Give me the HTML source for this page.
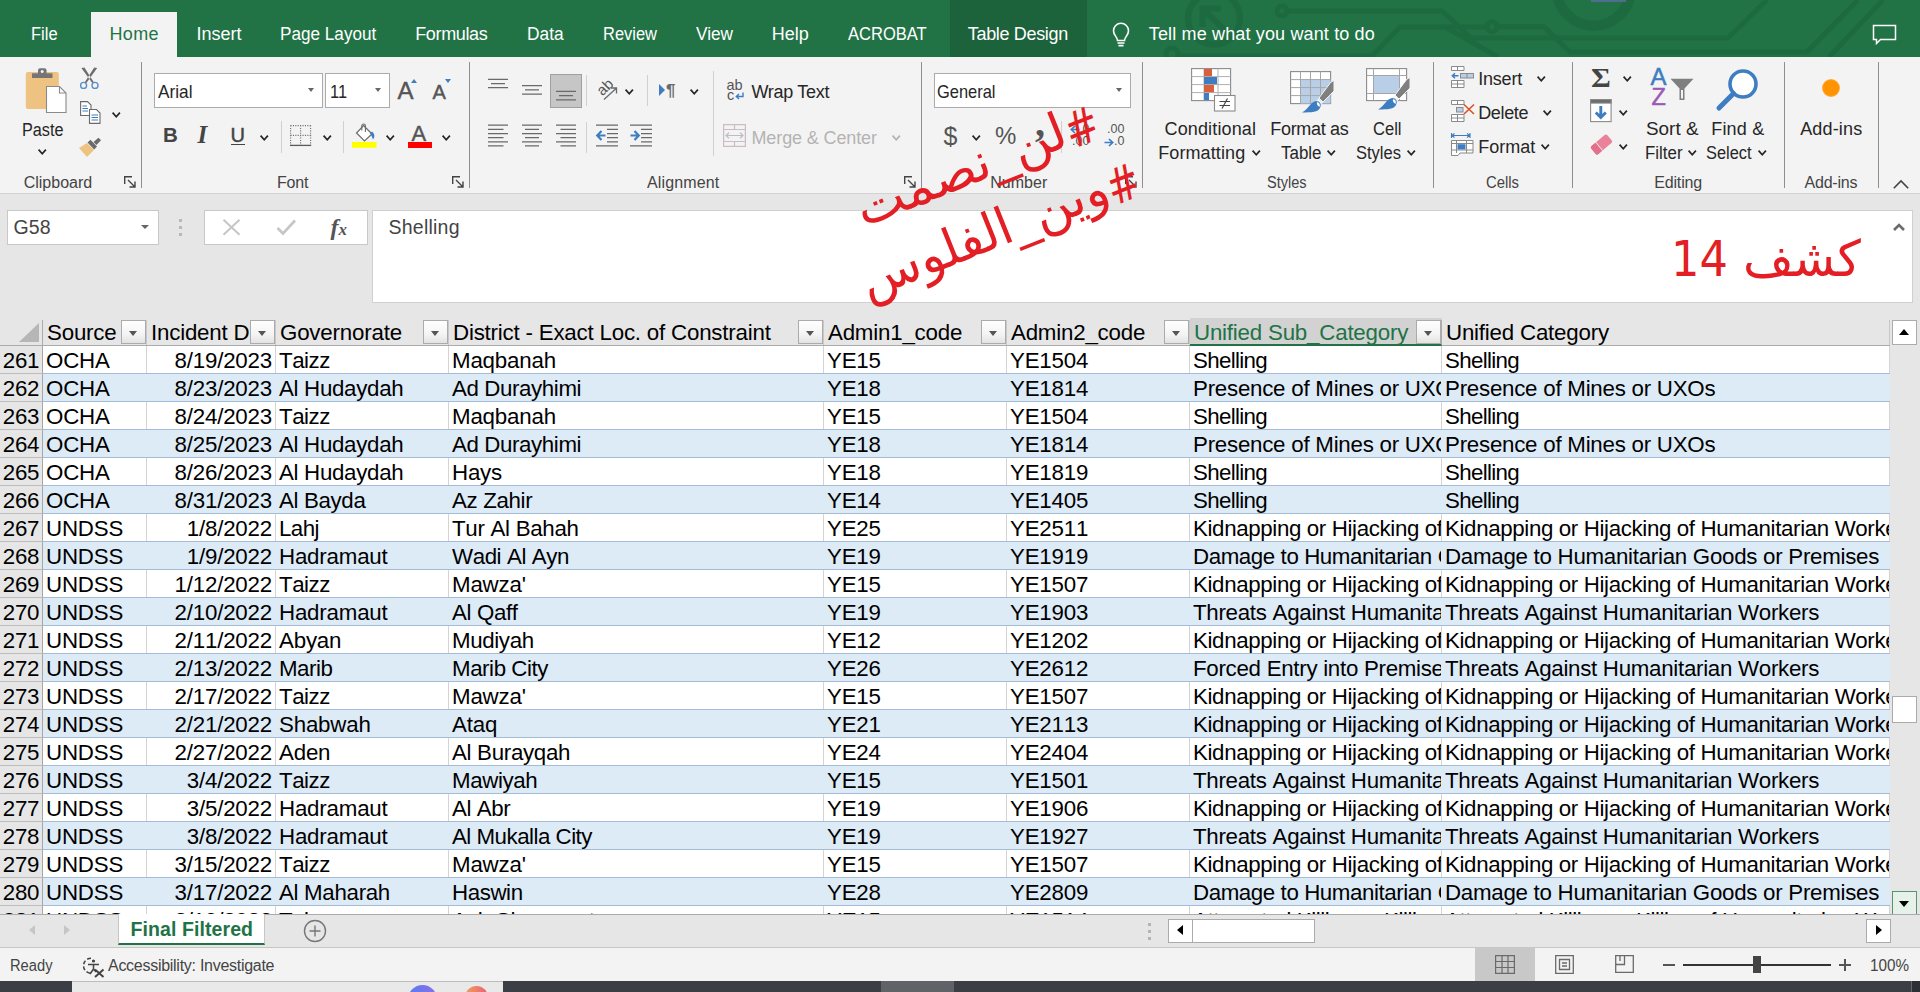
<!DOCTYPE html>
<html lang="en"><head><meta charset="utf-8"><title>Excel - Final Filtered</title>
<style>
html,body{margin:0;padding:0}
body{width:1920px;height:992px;overflow:hidden;position:relative;background:#e6e6e6;font-family:"Liberation Sans",sans-serif;}
.a,.t,svg{position:absolute}
.t{white-space:pre;display:block}
svg{overflow:visible}
#title{left:0;top:0;width:1920px;height:57px;background:#217346;overflow:hidden}
#ribbon{left:0;top:57px;width:1920px;height:137px;background:#f3f3f3;border-bottom:1px solid #d2d2d2;box-sizing:border-box}
.gs{width:1px;background:#8f8f8f;top:62px;height:126px}
.ss{width:1px;background:#d0d0d0}
.box{background:#fff;border:1px solid #ababab;box-sizing:border-box}
#grid{left:0;top:320px;width:1890px;height:594px;overflow:hidden;background:#fff;font-kerning:none}
.row{left:0;width:1890px;height:27px;background:#fff;border-bottom:1px solid #a5bcd8}
.b{background:#ddebf7}
.b .c{border-right-color:transparent}
.c{position:absolute;top:0;height:27px;overflow:hidden;white-space:pre;font-size:22.3px;letter-spacing:-0.19px;line-height:27px;color:#000;box-sizing:border-box;padding:0 3px 0 3px;border-right:1px solid #d4d4d4}
.rh{position:absolute;left:0;top:0;width:42px;height:27px;background:#e6e6e6;border-right:1px solid #a6a6a6;border-bottom:1px solid #bcbcbc;font-size:22.3px;letter-spacing:-0.19px;line-height:29px;text-align:center;color:#000;overflow:hidden;box-sizing:content-box}
.fb{position:absolute;width:25px;height:24px;top:0;box-sizing:border-box;border:1px solid #ababab;background:linear-gradient(#fff,#f4f4f4 60%,#e2e2e2)}
.fb:after{content:"";position:absolute;left:7px;top:10px;border-left:4.5px solid transparent;border-right:4.5px solid transparent;border-top:5px solid #555}
</style></head><body>
<div class="a" id="title">
<svg width="1920" height="57" viewBox="0 0 1920 57" fill="none" stroke="#1e6a40" stroke-width="5">
<circle cx="1214" cy="18.5" r="26" stroke-width="6.5"/><path d="M1229 34 L1203 9 M1202.500 27 V8.500 H1221" stroke-width="6"/>
<circle cx="1282" cy="11" r="5"/><path d="M1287 11 H1442 L1471 38 H1728 L1767 0"/>
<circle cx="1172" cy="54" r="6"/><path d="M1178 56 H1372 L1400 27 H1487"/>
<circle cx="1492" cy="26.700" r="5"/><path d="M1497 26.700 H1544 L1570 52 H1807 L1858 0"/>
<path d="M1447 28 L1498 57"/><path d="M1829 57 L1883 0"/>
<circle cx="1593.700" cy="-11.300" r="37" stroke-width="10.500"/>
</svg>
<div class="a" style="left:1591px;top:0;width:35px;height:2px;background:#4f6d8c"></div>
<div class="a" style="left:91px;top:12px;width:86px;height:45px;background:#f3f3f3"></div>
<div class="a" style="left:950px;top:0;width:137px;height:57px;background:#1c623b"></div>
<span class="t" id="t0" style="left:31.20px;top:24.76px;font-size:18.00px;line-height:18.00px;color:#ffffff;transform:scaleX(0.9167);transform-origin:0 0;">File</span>
<span class="t" id="t1" style="left:109.50px;top:24.76px;font-size:18.00px;line-height:18.00px;color:#217346;letter-spacing:0.328px;">Home</span>
<span class="t" id="t2" style="left:196.50px;top:24.76px;font-size:18.00px;line-height:18.00px;color:#ffffff;letter-spacing:-0.006px;">Insert</span>
<span class="t" id="t3" style="left:280.20px;top:24.76px;font-size:18.00px;line-height:18.00px;color:#ffffff;transform:scaleX(0.9526);transform-origin:0 0;">Page Layout</span>
<span class="t" id="t4" style="left:415.20px;top:24.76px;font-size:18.00px;line-height:18.00px;color:#ffffff;letter-spacing:-0.345px;">Formulas</span>
<span class="t" id="t5" style="left:527.20px;top:24.76px;font-size:18.00px;line-height:18.00px;color:#ffffff;transform:scaleX(0.9624);transform-origin:0 0;">Data</span>
<span class="t" id="t6" style="left:602.50px;top:24.76px;font-size:18.00px;line-height:18.00px;color:#ffffff;transform:scaleX(0.9148);transform-origin:0 0;">Review</span>
<span class="t" id="t7" style="left:696.20px;top:24.76px;font-size:18.00px;line-height:18.00px;color:#ffffff;transform:scaleX(0.9560);transform-origin:0 0;">View</span>
<span class="t" id="t8" style="left:771.80px;top:24.76px;font-size:18.00px;line-height:18.00px;color:#ffffff;letter-spacing:-0.010px;">Help</span>
<span class="t" id="t9" style="left:847.80px;top:24.76px;font-size:18.00px;line-height:18.00px;color:#ffffff;transform:scaleX(0.9185);transform-origin:0 0;">ACROBAT</span>
<span class="t" id="t10" style="left:967.80px;top:24.76px;font-size:18.00px;line-height:18.00px;color:#ffffff;letter-spacing:-0.333px;">Table Design</span>
<span class="t" id="t11" style="left:1148.80px;top:24.76px;font-size:18.00px;line-height:18.00px;color:#ffffff;letter-spacing:0.149px;">Tell me what you want to do</span>
<svg style="left:1111px;top:22px" width="20" height="26" viewBox="0 0 20 26" fill="none" stroke="#fff" stroke-width="1.6">
<path d="M6.5 18.5 C6.5 15 2.5 13.5 2.5 8.8 A7.5 7.5 0 0 1 17.5 8.8 C17.5 13.5 13.5 15 13.5 18.5 Z"/><path d="M6.5 21 H13.5 M7.5 23.6 H12.5"/></svg>
<svg style="left:1872px;top:24px" width="26" height="22" viewBox="0 0 26 22" fill="none" stroke="#fff" stroke-width="1.5">
<path d="M1.5 1.5 H23.5 V15.5 H8.5 L4.5 19.5 V15.5 H1.5 Z"/></svg>
</div>
<div class="a" id="ribbon"></div>
<div class="a gs" style="left:141.0px"></div>
<div class="a gs" style="left:469.0px"></div>
<div class="a gs" style="left:921.0px"></div>
<div class="a gs" style="left:1142.0px"></div>
<div class="a gs" style="left:1433.0px"></div>
<div class="a gs" style="left:1572.0px"></div>
<div class="a gs" style="left:1784.0px"></div>
<div class="a gs" style="left:1878.0px"></div>
<span class="t" id="t12" style="left:23.70px;top:174.86px;font-size:16.00px;line-height:16.00px;color:#444;">Clipboard</span>
<span class="t" id="t13" style="left:277.00px;top:174.86px;font-size:16.00px;line-height:16.00px;color:#444;letter-spacing:-0.172px;">Font</span>
<span class="t" id="t14" style="left:647.00px;top:174.86px;font-size:16.00px;line-height:16.00px;color:#444;letter-spacing:0.130px;">Alignment</span>
<span class="t" id="t15" style="left:990.30px;top:174.86px;font-size:16.00px;line-height:16.00px;color:#444;">Number</span>
<span class="t" id="t16" style="left:1267.00px;top:174.86px;font-size:16.00px;line-height:16.00px;color:#444;transform:scaleX(0.9064);transform-origin:0 0;">Styles</span>
<span class="t" id="t17" style="left:1485.50px;top:174.86px;font-size:16.00px;line-height:16.00px;color:#444;transform:scaleX(0.9279);transform-origin:0 0;">Cells</span>
<span class="t" id="t18" style="left:1654.20px;top:174.86px;font-size:16.00px;line-height:16.00px;color:#444;letter-spacing:-0.154px;">Editing</span>
<span class="t" id="t19" style="left:1804.50px;top:174.86px;font-size:16.00px;line-height:16.00px;color:#444;letter-spacing:-0.208px;">Add-ins</span>
<svg style="left:124.0px;top:176.0px" width="12" height="12" viewBox="0 0 12 12" fill="none" stroke="#444" stroke-width="1.4"><path d="M0.7 8 V0.7 H8"/><path d="M4 4 L11 11 M11 5.5 V11 H5.5"/></svg>
<svg style="left:452.0px;top:176.0px" width="12" height="12" viewBox="0 0 12 12" fill="none" stroke="#444" stroke-width="1.4"><path d="M0.7 8 V0.7 H8"/><path d="M4 4 L11 11 M11 5.5 V11 H5.5"/></svg>
<svg style="left:904.0px;top:176.0px" width="12" height="12" viewBox="0 0 12 12" fill="none" stroke="#444" stroke-width="1.4"><path d="M0.7 8 V0.7 H8"/><path d="M4 4 L11 11 M11 5.5 V11 H5.5"/></svg>
<svg style="left:1125.0px;top:176.0px" width="12" height="12" viewBox="0 0 12 12" fill="none" stroke="#444" stroke-width="1.4"><path d="M0.7 8 V0.7 H8"/><path d="M4 4 L11 11 M11 5.5 V11 H5.5"/></svg>
<svg style="left:1892.5px;top:180px" width="16" height="9" viewBox="0 0 16 9" fill="none" stroke="#444" stroke-width="1.6"><path d="M0.8 8.2 L8 1 L15.2 8.2"/></svg>
<svg style="left:25px;top:67px" width="44" height="47" viewBox="0 0 44 47">
<rect x="0.8" y="5" width="33" height="37" rx="2" fill="#eec382"/><rect x="7" y="6.3" width="20.5" height="4.7" fill="#757575"/><rect x="13" y="1.3" width="8.5" height="7" rx="2" fill="#757575"/><circle cx="17.2" cy="4.6" r="1.5" fill="#f3f3f3"/>
<path d="M21.5 19.5 H34.5 L41 26 V45.5 H21.5 Z" fill="#fff" stroke="#8a8a8a" stroke-width="1.1"/><path d="M34.5 19.5 V26 H41" fill="none" stroke="#8a8a8a" stroke-width="1.1"/></svg>
<span class="t" id="t20" style="left:22.00px;top:120.76px;font-size:18.00px;line-height:18.00px;color:#262626;transform:scaleX(0.9016);transform-origin:0 0;">Paste</span>
<svg style="left:38.3px;top:148.8px" width="8.5" height="5.8" viewBox="0 0 8.5 5.8" fill="none" stroke="#262626" stroke-width="1.7"><path d="M0.6 0.6 L4.25 4.80 L7.90 0.6"/></svg>
<svg style="left:79px;top:67px" width="21" height="23" viewBox="0 0 21 23" fill="none"><path d="M2.4 0.9 L5.4 0.5 L15 15.4 L13.4 16.3 Z M18.2 0.9 L15.2 0.5 L5.6 15.4 L7.2 16.3 Z" fill="#6e6e6e"/><circle cx="4.6" cy="18.4" r="3" stroke="#5b8fc9" stroke-width="1.4"/><circle cx="16" cy="18.4" r="3" stroke="#5b8fc9" stroke-width="1.4"/></svg>
<svg style="left:80px;top:101px" width="21" height="23" viewBox="0 0 21 23" fill="#fff" stroke="#6a6a6a" stroke-width="1.1"><path d="M0.6 0.6 H7.5 L11 4 V14.5 H0.6 Z"/><path d="M9.5 8.5 H16.5 L20 12 V22.4 H9.5 Z"/><path d="M2.5 5 H7 M2.5 7.5 H8 M2.5 10 H8 M11.5 14 H18 M11.5 16.5 H18 M11.5 19 H18" stroke="#3e7dc1" stroke-width="1"/></svg>
<svg style="left:112.0px;top:112.2px" width="8.5" height="5.8" viewBox="0 0 8.5 5.8" fill="none" stroke="#262626" stroke-width="1.7"><path d="M0.6 0.6 L4.25 4.80 L7.90 0.6"/></svg>
<svg style="left:78px;top:137px" width="24" height="21" viewBox="0 0 24 21"><path d="M1 11 L9 6 L16 13 L9 20 Z" fill="#eec382"/><path d="M9.5 5.5 L12.5 2.8 L19 9.5 L16.2 12.5 Z" fill="#6a6a6a"/><path d="M15.5 5 L20.5 0.8 L23 3.3 L18.5 8 Z" fill="#6a6a6a"/></svg>
<div class="a box" style="left:154px;top:73px;width:169px;height:35px"></div>
<div class="a box" style="left:325px;top:73px;width:65px;height:35px"></div>
<span class="t" id="t21" style="left:157.50px;top:82.22px;font-size:19.00px;line-height:19.00px;color:#262626;transform:scaleX(0.9075);transform-origin:0 0;">Arial</span>
<span class="t" id="t22" style="left:330.00px;top:82.22px;font-size:19.00px;line-height:19.00px;color:#262626;transform:scaleX(0.8614);transform-origin:0 0;">11</span>
<div class="a" style="left:307.5px;top:88.0px;border-left:3.8px solid transparent;border-right:3.8px solid transparent;border-top:4.2px solid #666"></div>
<div class="a" style="left:375.0px;top:88.0px;border-left:3.8px solid transparent;border-right:3.8px solid transparent;border-top:4.2px solid #666"></div>
<span class="t" id="t23" style="left:397.50px;top:78.68px;font-size:24.00px;line-height:24.00px;color:#555;-webkit-text-stroke:0.45px #555;">A</span>
<div class="a" style="left:411px;top:79px;border-left:3.5px solid transparent;border-right:3.5px solid transparent;border-bottom:4px solid #3e7dc1"></div>
<span class="t" id="t24" style="left:432.50px;top:82.07px;font-size:20.00px;line-height:20.00px;color:#555;-webkit-text-stroke:0.45px #555;">A</span>
<div class="a" style="left:445px;top:79px;border-left:3.5px solid transparent;border-right:3.5px solid transparent;border-top:4px solid #3e7dc1"></div>
<span class="t" id="t25" style="left:163.00px;top:124.65px;font-size:20.50px;line-height:20.50px;color:#444;font-weight:bold;">B</span>
<span class="t" id="t26" style="left:197.50px;top:121.56px;font-size:25.00px;line-height:25.00px;color:#444;font-weight:bold;font-style:italic;font-family:'Liberation Serif',serif;">I</span>
<span class="t" id="t27" style="left:230.50px;top:125.07px;font-size:20.00px;line-height:20.00px;color:#444;-webkit-text-stroke:0.45px #444;">U</span>
<div class="a" style="left:230.5px;top:143.5px;width:14px;height:1.5px;background:#444"></div>
<svg style="left:260.0px;top:134.7px" width="8.5" height="5.8" viewBox="0 0 8.5 5.8" fill="none" stroke="#262626" stroke-width="1.7"><path d="M0.6 0.6 L4.25 4.80 L7.90 0.6"/></svg>
<div class="a ss" style="left:280.5px;top:121px;height:32px"></div>
<svg style="left:290px;top:125px" width="22" height="22" viewBox="0 0 22 22" fill="none" stroke="#6e6e6e" stroke-width="1.1"><path d="M0.5 0.6 H21 M0.6 0.5 V20 M20.6 0.5 V20 M10.6 0.5 V20 M0.5 10.4 H21" stroke-dasharray="1.1 1.3"/><path d="M0 20.4 H21.2" stroke="#5a5a5a" stroke-width="1.3"/></svg>
<svg style="left:323.0px;top:135.0px" width="8.5" height="5.8" viewBox="0 0 8.5 5.8" fill="none" stroke="#262626" stroke-width="1.7"><path d="M0.6 0.6 L4.25 4.80 L7.90 0.6"/></svg>
<div class="a ss" style="left:343px;top:121px;height:32px"></div>
<svg style="left:352px;top:123px" width="25" height="25" viewBox="0 0 25 25" fill="none"><rect x="0" y="19" width="24.5" height="5.8" fill="#ffff00"/>
<path d="M11.5 2.5 L20 11 L12.5 18 L4.5 10 Z" fill="#fff" stroke="#6a6a6a" stroke-width="1.2"/><path d="M9.8 7.5 V2.8 A1.8 1.8 0 0 1 13.4 2.8 V9" stroke="#6a6a6a" stroke-width="1.1"/><path d="M20 8.5 C23 11 23 14 21 16.5 C20 14 19.5 12 18 10.5 Z" fill="#3e7dc1"/></svg>
<svg style="left:386.0px;top:135.0px" width="8.5" height="5.8" viewBox="0 0 8.5 5.8" fill="none" stroke="#262626" stroke-width="1.7"><path d="M0.6 0.6 L4.25 4.80 L7.90 0.6"/></svg>
<span class="t" id="t28" style="left:411.50px;top:122.88px;font-size:22.00px;line-height:22.00px;color:#555;-webkit-text-stroke:0.45px #555;">A</span>
<div class="a" style="left:408px;top:142px;width:24px;height:5.8px;background:#ff0000"></div>
<svg style="left:441.7px;top:135.0px" width="8.5" height="5.8" viewBox="0 0 8.5 5.8" fill="none" stroke="#262626" stroke-width="1.7"><path d="M0.6 0.6 L4.25 4.80 L7.90 0.6"/></svg>
<svg style="left:0;top:0" width="1" height="1"><path d="M488.0 79.3 H508.0M491.0 83.5 H505.0M488.0 87.7 H508.0" stroke="#6a6a6a" stroke-width="1.25" fill="none"/></svg>
<svg style="left:0;top:0" width="1" height="1"><path d="M522.0 85.6 H542.0M525.0 89.8 H539.0M522.0 94.0 H542.0" stroke="#6a6a6a" stroke-width="1.25" fill="none"/></svg>
<div class="a" style="left:550px;top:74px;width:32px;height:34px;background:#c6c6c6;border:1px solid #a0a0a0;box-sizing:border-box"></div>
<svg style="left:0;top:0" width="1" height="1"><path d="M556.0 91.4 H576.0M559.0 95.6 H573.0M556.0 99.8 H576.0" stroke="#6a6a6a" stroke-width="1.25" fill="none"/></svg>
<svg style="left:0;top:0" width="1" height="1"><path d="M488.0 125.2 H508.0M488.0 129.3 H503.5M488.0 133.5 H508.0M488.0 137.6 H503.5M488.0 141.8 H508.0M488.0 145.9 H503.5" stroke="#6a6a6a" stroke-width="1.25" fill="none"/></svg>
<svg style="left:0;top:0" width="1" height="1"><path d="M522.0 125.2 H542.0M525.0 129.3 H539.0M522.0 133.5 H542.0M525.0 137.6 H539.0M522.0 141.8 H542.0M525.0 145.9 H539.0" stroke="#6a6a6a" stroke-width="1.25" fill="none"/></svg>
<svg style="left:0;top:0" width="1" height="1"><path d="M556.0 125.2 H576.0M560.5 129.3 H576.0M556.0 133.5 H576.0M560.5 137.6 H576.0M556.0 141.8 H576.0M560.5 145.9 H576.0" stroke="#6a6a6a" stroke-width="1.25" fill="none"/></svg>
<div class="a ss" style="left:586px;top:75px;height:31px"></div><div class="a ss" style="left:586px;top:122px;height:31px"></div>
<span class="t" style="left:603.5px;top:83px;font-size:15px;line-height:15px;color:#555;transform:rotate(-45deg);transform-origin:0 100%">ab</span>
<svg style="left:603px;top:87px" width="15" height="14" viewBox="0 0 15 14" fill="none" stroke="#6a6a6a" stroke-width="1.3"><path d="M1 12.5 L13.3 1.2 M8 1 H13.5 V6.5"/></svg>
<svg style="left:625.0px;top:88.6px" width="8.5" height="5.8" viewBox="0 0 8.5 5.8" fill="none" stroke="#262626" stroke-width="1.7"><path d="M0.6 0.6 L4.25 4.80 L7.90 0.6"/></svg>
<div class="a ss" style="left:647px;top:75px;height:31px"></div>
<div class="a" style="left:658.7px;top:84px;border-top:6px solid transparent;border-bottom:6px solid transparent;border-left:6.5px solid #3e7dc1"></div>
<span class="t" id="t29" style="left:666.00px;top:81.61px;font-size:17.00px;line-height:17.00px;color:#6a6a6a;font-weight:bold;">¶</span>
<svg style="left:690.0px;top:88.6px" width="8.5" height="5.8" viewBox="0 0 8.5 5.8" fill="none" stroke="#262626" stroke-width="1.7"><path d="M0.6 0.6 L4.25 4.80 L7.90 0.6"/></svg>
<svg style="left:0;top:0" width="1" height="1"><path d="M596.0 125.2 H618.0M607.0 129.3 H618.0M607.0 133.5 H618.0M607.0 137.6 H618.0M607.0 141.8 H618.0M596.0 145.9 H618.0" stroke="#6a6a6a" stroke-width="1.25" fill="none"/></svg>
<svg style="left:596px;top:130px" width="10" height="11" viewBox="0 0 10 11" fill="none" stroke="#3e7dc1" stroke-width="2.2"><path d="M9.5 5.5 H1.5 M5.5 1 L1.2 5.5 L5.5 10"/></svg>
<svg style="left:0;top:0" width="1" height="1"><path d="M630.0 125.2 H652.0M641.0 129.3 H652.0M641.0 133.5 H652.0M641.0 137.6 H652.0M641.0 141.8 H652.0M630.0 145.9 H652.0" stroke="#6a6a6a" stroke-width="1.25" fill="none"/></svg>
<svg style="left:630px;top:130px" width="10" height="11" viewBox="0 0 10 11" fill="none" stroke="#3e7dc1" stroke-width="2.2"><path d="M0.5 5.5 H8.5 M4.5 1 L8.8 5.5 L4.5 10"/></svg>
<div class="a ss" style="left:712.5px;top:71px;height:85px"></div>
<span class="t" id="t30" style="left:726.50px;top:78.23px;font-size:14.50px;line-height:14.50px;color:#555;">ab</span>
<span class="t" id="t31" style="left:727.00px;top:88.23px;font-size:14.50px;line-height:14.50px;color:#555;">c</span>
<svg style="left:735px;top:92px" width="9" height="8" viewBox="0 0 9 8" fill="none" stroke="#3e7dc1" stroke-width="1.4"><path d="M8 0.5 V4.5 H1.5 M4 2 L1.3 4.5 L4 7"/></svg>
<span class="t" id="t32" style="left:751.50px;top:83.06px;font-size:18.00px;line-height:18.00px;color:#262626;letter-spacing:-0.297px;">Wrap Text</span>
<svg style="left:723px;top:124px" width="23" height="23" viewBox="0 0 23 23" fill="none" stroke="#c9bcc6" stroke-width="1.2"><path d="M0.6 0.6 H22.4 V22.4 H0.6 Z M0.6 5.5 H22.4 M0.6 17.5 H22.4 M11.5 0.6 V5.5 M11.5 17.5 V22.4"/><path d="M3 11.5 H20 M6 8.8 L3 11.5 L6 14.2 M17 8.8 L20 11.5 L17 14.2" stroke="#bdbdbd"/></svg>
<span class="t" id="t33" style="left:751.50px;top:129.06px;font-size:18.00px;line-height:18.00px;color:#b3b3b3;letter-spacing:-0.120px;">Merge &amp; Center</span>
<svg style="left:891.7px;top:134.5px" width="8.5" height="5.8" viewBox="0 0 8.5 5.8" fill="none" stroke="#b3b3b3" stroke-width="1.7"><path d="M0.6 0.6 L4.25 4.80 L7.90 0.6"/></svg>
<div class="a box" style="left:934px;top:73px;width:197px;height:35px"></div>
<span class="t" id="t34" style="left:937.00px;top:82.22px;font-size:19.00px;line-height:19.00px;color:#262626;transform:scaleX(0.8653);transform-origin:0 0;">General</span>
<div class="a" style="left:1115.8px;top:88.0px;border-left:3.8px solid transparent;border-right:3.8px solid transparent;border-top:4.2px solid #666"></div>
<span class="t" id="t35" style="left:943.50px;top:123.84px;font-size:25.00px;line-height:25.00px;color:#555;">$</span>
<svg style="left:971.7px;top:134.8px" width="8.5" height="5.8" viewBox="0 0 8.5 5.8" fill="none" stroke="#262626" stroke-width="1.7"><path d="M0.6 0.6 L4.25 4.80 L7.90 0.6"/></svg>
<span class="t" id="t36" style="left:995.00px;top:124.18px;font-size:24.00px;line-height:24.00px;color:#555;">%</span>
<span class="t" id="t37" style="left:1035.00px;top:102.50px;font-size:40.00px;line-height:40.00px;color:#555;font-weight:bold;font-family:'Liberation Serif',serif;">,</span>
<div class="a ss" style="left:1060.5px;top:121px;height:32px"></div>
<span class="t" id="t38" style="left:1079.00px;top:122.92px;font-size:12.50px;line-height:12.50px;color:#555;">.0</span>
<span class="t" id="t39" style="left:1072.00px;top:135.42px;font-size:12.50px;line-height:12.50px;color:#555;">.00</span>
<svg style="left:1070px;top:125px" width="10" height="9" viewBox="0 0 10 9" fill="none" stroke="#3e7dc1" stroke-width="1.7"><path d="M9.5 4.5 H1.5 M5 1 L1.3 4.5 L5 8"/></svg>
<span class="t" id="t40" style="left:1107.00px;top:122.92px;font-size:12.50px;line-height:12.50px;color:#555;">.00</span>
<span class="t" id="t41" style="left:1114.00px;top:135.42px;font-size:12.50px;line-height:12.50px;color:#555;">.0</span>
<svg style="left:1104px;top:137.5px" width="10" height="9" viewBox="0 0 10 9" fill="none" stroke="#3e7dc1" stroke-width="1.7"><path d="M0.5 4.5 H8.5 M5 1 L8.7 4.5 L5 8"/></svg>
<svg style="left:1191px;top:68px" width="45" height="44" viewBox="0 0 45 44"><rect x="0.6" y="0.6" width="39" height="32" fill="#fff" stroke="#8a8a8a" stroke-width="1.1"/>
<path d="M0.6 8.6 H39.6 M0.6 16.6 H39.6 M0.6 24.6 H39.6 M13 0.6 V32.6 M27 0.6 V32.6" stroke="#b0b0b0" stroke-width="1" fill="none"/>
<rect x="13" y="1" width="8" height="7.2" fill="#d9603b"/><rect x="13" y="9" width="13" height="7.2" fill="#3e7dc1"/><rect x="13" y="17" width="10" height="7.2" fill="#d9603b"/><rect x="13" y="25" width="5" height="7.2" fill="#3e7dc1"/>
<rect x="23.5" y="27.5" width="20.5" height="15.5" fill="#fff" stroke="#8a8a8a" stroke-width="1.1"/><path d="M28.5 33.5 H39 M28.5 37.5 H39 M36.5 30.5 L31 40.5" stroke="#444" stroke-width="1.2"/></svg>
<span class="t" id="t42" style="left:1164.50px;top:119.86px;font-size:18.00px;line-height:18.00px;color:#262626;letter-spacing:0.144px;">Conditional</span>
<span class="t" id="t43" style="left:1158.20px;top:143.96px;font-size:18.00px;line-height:18.00px;color:#262626;letter-spacing:0.108px;">Formatting</span>
<svg style="left:1252.2px;top:149.5px" width="8.5" height="5.8" viewBox="0 0 8.5 5.8" fill="none" stroke="#262626" stroke-width="1.7"><path d="M0.6 0.6 L4.25 4.80 L7.90 0.6"/></svg>
<svg style="left:1290px;top:71px" width="45" height="43" viewBox="0 0 45 43"><rect x="0.6" y="0.6" width="40" height="32" fill="#fff" stroke="#8a8a8a" stroke-width="1.1"/><rect x="10.5" y="8.5" width="30" height="24" fill="#b9cfe8"/>
<path d="M0.6 8.6 H40.6 M0.6 16.6 H40.6 M0.6 24.6 H40.6 M10.5 0.6 V32.6 M20.5 0.6 V32.6 M30.5 0.6 V32.6" stroke="#a6a6a6" stroke-width="1" fill="none"/>
<path d="M29 27 L41 11 L44 9.5 V20 L33 31 Z" fill="#7f7f7f" stroke="#f3f3f3" stroke-width="1"/><path d="M28.5 27.5 L33 31.5 L30.5 34 L26 30 Z" fill="#f3f3f3"/><path d="M26 30 C30 30 32 33 30 37 C28 41 22 41.5 12 41.5 C19 38 20 31 26 30 Z" fill="#3e7dc1"/><path d="M27 31 C29.5 31.5 30.5 33.5 29.5 36 C27.5 35 26.5 33 27 31Z" fill="#fff"/></svg>
<span class="t" id="t44" style="left:1270.30px;top:119.86px;font-size:18.00px;line-height:18.00px;color:#262626;letter-spacing:-0.316px;">Format as</span>
<span class="t" id="t45" style="left:1280.50px;top:143.96px;font-size:18.00px;line-height:18.00px;color:#262626;transform:scaleX(0.9412);transform-origin:0 0;">Table</span>
<svg style="left:1327.2px;top:149.5px" width="8.5" height="5.8" viewBox="0 0 8.5 5.8" fill="none" stroke="#262626" stroke-width="1.7"><path d="M0.6 0.6 L4.25 4.80 L7.90 0.6"/></svg>
<svg style="left:1365.5px;top:68px" width="45" height="43" viewBox="0 0 45 43"><rect x="0.6" y="0.6" width="40" height="32" fill="#fff" stroke="#8a8a8a" stroke-width="1.1"/><rect x="7.5" y="7.5" width="26" height="18" fill="#b9cfe8"/>
<path d="M0.6 7.5 H40.6 M0.6 25.5 H40.6 M7.5 0.6 V32.6 M33.5 0.6 V32.6" stroke="#a6a6a6" stroke-width="1" fill="none"/>
<path d="M29 27 L41 11 L44 9.5 V20 L33 31 Z" fill="#7f7f7f" stroke="#f3f3f3" stroke-width="1"/><path d="M28.5 27.5 L33 31.5 L30.5 34 L26 30 Z" fill="#f3f3f3"/><path d="M26 30 C30 30 32 33 30 37 C28 41 22 41.5 12 41.5 C19 38 20 31 26 30 Z" fill="#3e7dc1"/><path d="M27 31 C29.5 31.5 30.5 33.5 29.5 36 C27.5 35 26.5 33 27 31Z" fill="#fff"/></svg>
<span class="t" id="t46" style="left:1372.80px;top:119.86px;font-size:18.00px;line-height:18.00px;color:#262626;transform:scaleX(0.9189);transform-origin:0 0;">Cell</span>
<span class="t" id="t47" style="left:1355.80px;top:143.96px;font-size:18.00px;line-height:18.00px;color:#262626;transform:scaleX(0.9178);transform-origin:0 0;">Styles</span>
<svg style="left:1407.2px;top:149.5px" width="8.5" height="5.8" viewBox="0 0 8.5 5.8" fill="none" stroke="#262626" stroke-width="1.7"><path d="M0.6 0.6 L4.25 4.80 L7.90 0.6"/></svg>
<svg style="left:1450.5px;top:66px" width="23" height="22" viewBox="0 0 23 22" fill="#fff" stroke="#8a8a8a" stroke-width="1"><path d="M0.5 0.5 H13 V4.5 H0.5 Z M6.5 0.5 V4.5"/><rect x="9.5" y="7.5" width="13" height="4.5" fill="#b9cfe8"/><path d="M16 7.5 V12"/><path d="M0.5 14.5 H13 V21.5 H0.5 Z M0.5 18 H13 M6.5 14.5 V21.5"/><path d="M7.5 9.8 H1.5 M4 7.3 L1.3 9.8 L4 12.3" stroke="#3e7dc1" stroke-width="1.5" fill="none"/></svg>
<span class="t" id="t48" style="left:1478.20px;top:70.16px;font-size:18.00px;line-height:18.00px;color:#262626;letter-spacing:-0.206px;">Insert</span>
<svg style="left:1537.0px;top:76.0px" width="8.5" height="5.8" viewBox="0 0 8.5 5.8" fill="none" stroke="#262626" stroke-width="1.7"><path d="M0.6 0.6 L4.25 4.80 L7.90 0.6"/></svg>
<svg style="left:1450.5px;top:100px" width="24" height="22" viewBox="0 0 24 22" fill="#fff" stroke="#8a8a8a" stroke-width="1"><path d="M0.5 0.5 H13 V4.5 H0.5 Z M6.5 0.5 V4.5"/><rect x="5.5" y="7.5" width="6.5" height="4.5" fill="#b9cfe8"/><path d="M0.5 14.5 H13 V21.5 H0.5 Z M0.5 18 H13 M6.5 14.5 V21.5"/><path d="M13 4.5 L23 14 M23 4.5 L13 14" stroke="#d9502b" stroke-width="1.6" fill="none"/></svg>
<span class="t" id="t49" style="left:1478.20px;top:104.06px;font-size:18.00px;line-height:18.00px;color:#262626;letter-spacing:-0.346px;">Delete</span>
<svg style="left:1543.0px;top:110.0px" width="8.5" height="5.8" viewBox="0 0 8.5 5.8" fill="none" stroke="#262626" stroke-width="1.7"><path d="M0.6 0.6 L4.25 4.80 L7.90 0.6"/></svg>
<svg style="left:1450.5px;top:133px" width="23" height="24" viewBox="0 0 23 24" fill="#fff" stroke="#8a8a8a" stroke-width="1"><path d="M0.5 2.5 H19 M0.5 0 V5 M19 0 V5 M3.5 0.5 L0.8 2.5 L3.5 4.5 M16 0.5 L18.7 2.5 L16 4.5" stroke="#3e7dc1" stroke-width="1.1" fill="none"/><path d="M0.5 7.5 H22 V20 H9 L7 22.5 H0.5 Z M0.5 10.5 H22 M0.5 17 H22 M5.5 7.5 V20 M15.5 7.5 V20"/><rect x="6.5" y="11.2" width="8" height="5.2" fill="#3e7dc1" stroke="none"/></svg>
<span class="t" id="t50" style="left:1478.20px;top:137.86px;font-size:18.00px;line-height:18.00px;color:#262626;">Format</span>
<svg style="left:1541.0px;top:143.5px" width="8.5" height="5.8" viewBox="0 0 8.5 5.8" fill="none" stroke="#262626" stroke-width="1.7"><path d="M0.6 0.6 L4.25 4.80 L7.90 0.6"/></svg>
<span class="t" id="t51" style="left:1591.00px;top:63.55px;font-size:28.00px;line-height:28.00px;color:#444;font-weight:bold;font-family:'Liberation Serif',serif;transform:scaleX(1.08);transform-origin:0 0;">Σ</span>
<svg style="left:1623.0px;top:76.0px" width="8.5" height="5.8" viewBox="0 0 8.5 5.8" fill="none" stroke="#262626" stroke-width="1.7"><path d="M0.6 0.6 L4.25 4.80 L7.90 0.6"/></svg>
<svg style="left:1590px;top:99px" width="22" height="23" viewBox="0 0 22 23" fill="#fff" stroke="#8a8a8a" stroke-width="1.1"><rect x="0.6" y="0.6" width="20.5" height="22"/><rect x="0.6" y="0.6" width="20.5" height="3.5" fill="#6a6a6a"/><path d="M10.8 7 V18.5 M5.8 13.5 L10.8 18.5 L15.8 13.5" stroke="#3e7dc1" stroke-width="2.9" fill="none"/></svg>
<svg style="left:1619.0px;top:110.0px" width="8.5" height="5.8" viewBox="0 0 8.5 5.8" fill="none" stroke="#262626" stroke-width="1.7"><path d="M0.6 0.6 L4.25 4.80 L7.90 0.6"/></svg>
<svg style="left:1590px;top:133px" width="23" height="23" viewBox="0 0 23 23"><g transform="rotate(-40 11.5 11.5)"><rect x="1" y="6.2" width="21" height="10.6" rx="2" fill="#ea8299"/><rect x="1" y="6.2" width="7.5" height="10.6" rx="2" fill="#e3708a"/><path d="M8.5 6.2 V16.8" stroke="#f3f3f3" stroke-width="0.9"/></g></svg>
<svg style="left:1619.0px;top:144.0px" width="8.5" height="5.8" viewBox="0 0 8.5 5.8" fill="none" stroke="#262626" stroke-width="1.7"><path d="M0.6 0.6 L4.25 4.80 L7.90 0.6"/></svg>
<span class="t" id="t52" style="left:1650.50px;top:65.18px;font-size:24.00px;line-height:24.00px;color:#3e7dc1;-webkit-text-stroke:0.5px #3e7dc1;">A</span>
<span class="t" id="t53" style="left:1651.50px;top:86.11px;font-size:23.50px;line-height:23.50px;color:#9b59b6;-webkit-text-stroke:0.5px #9b59b6;">Z</span>
<svg style="left:1670px;top:78px" width="24" height="23" viewBox="0 0 24 23"><path d="M0.5 0.8 H23.5 L14.5 10.5 V22 H9.5 V10.5 Z" fill="#7f7f7f"/><path d="M11 12 H13 V20.5 H11 Z" fill="#f3f3f3"/></svg>
<span class="t" id="t54" style="left:1645.50px;top:119.86px;font-size:18.00px;line-height:18.00px;color:#262626;transform:scaleX(1.0493);transform-origin:0 0;">Sort &amp;</span>
<span class="t" id="t55" style="left:1644.50px;top:143.96px;font-size:18.00px;line-height:18.00px;color:#262626;transform:scaleX(0.9375);transform-origin:0 0;">Filter</span>
<svg style="left:1688.0px;top:149.5px" width="8.5" height="5.8" viewBox="0 0 8.5 5.8" fill="none" stroke="#262626" stroke-width="1.7"><path d="M0.6 0.6 L4.25 4.80 L7.90 0.6"/></svg>
<svg style="left:1716px;top:68px" width="44" height="44" viewBox="0 0 44 44" fill="none"><circle cx="27" cy="16" r="13" fill="#fff" stroke="#3e7dc1" stroke-width="3.6"/><path d="M17.5 25.5 L3 40" stroke="#3e7dc1" stroke-width="5" stroke-linecap="round"/></svg>
<span class="t" id="t56" style="left:1711.20px;top:119.86px;font-size:18.00px;line-height:18.00px;color:#262626;letter-spacing:0.194px;">Find &amp;</span>
<span class="t" id="t57" style="left:1706.20px;top:143.96px;font-size:18.00px;line-height:18.00px;color:#262626;transform:scaleX(0.9094);transform-origin:0 0;">Select</span>
<svg style="left:1757.5px;top:149.5px" width="8.5" height="5.8" viewBox="0 0 8.5 5.8" fill="none" stroke="#262626" stroke-width="1.7"><path d="M0.6 0.6 L4.25 4.80 L7.90 0.6"/></svg>
<div class="a" style="left:1821.5px;top:78.5px;width:18px;height:18px;border-radius:9px;background:radial-gradient(circle,#ff9400 0,#ff9400 58%,rgba(255,160,40,0.5) 80%,rgba(255,170,60,0) 100%)"></div>
<span class="t" id="t58" style="left:1800.20px;top:119.86px;font-size:18.00px;line-height:18.00px;color:#262626;letter-spacing:0.161px;">Add-ins</span>
<div class="a box" style="left:7px;top:210px;width:152px;height:35px;border-color:#c8c8c8"></div>
<span class="t" id="t59" style="left:13.50px;top:218.49px;font-size:19.50px;line-height:19.50px;color:#444;letter-spacing:0.070px;">G58</span>
<div class="a" style="left:140.5px;top:225px;border-left:4px solid transparent;border-right:4px solid transparent;border-top:4px solid #666"></div>
<div class="a" style="left:179px;top:219px;width:3px;height:3px;background:#b8b8b8"></div>
<div class="a" style="left:179px;top:226px;width:3px;height:3px;background:#b8b8b8"></div>
<div class="a" style="left:179px;top:233px;width:3px;height:3px;background:#b8b8b8"></div>
<div class="a box" style="left:204px;top:210px;width:164px;height:35px;border-color:#c8c8c8"></div>
<svg style="left:222px;top:219px" width="20" height="17" viewBox="0 0 20 17" fill="none" stroke="#c6c6c6" stroke-width="2"><path d="M1.5 0.8 L17.5 15.8 M17.5 0.8 L1.5 15.8"/></svg>
<svg style="left:276px;top:219px" width="21" height="17" viewBox="0 0 21 17" fill="none" stroke="#c6c6c6" stroke-width="2.6"><path d="M1.5 9 L7 14.5 L19 1.5"/></svg>
<span class="t" id="t60" style="left:330.50px;top:214.90px;font-size:24.00px;line-height:24.00px;color:#555;font-weight:bold;font-style:italic;font-family:'Liberation Serif',serif;">f</span>
<span class="t" id="t61" style="left:338.50px;top:221.26px;font-size:17.00px;line-height:17.00px;color:#555;font-weight:bold;font-style:italic;font-family:'Liberation Serif',serif;">x</span>
<div class="a box" style="left:372px;top:210px;width:1541px;height:93px;border-color:#d0d0d0"></div>
<span class="t" id="t62" style="left:388.50px;top:218.49px;font-size:19.50px;line-height:19.50px;color:#444;letter-spacing:0.230px;">Shelling</span>
<svg style="left:1892.5px;top:222.5px" width="12" height="8" viewBox="0 0 12 8" fill="none" stroke="#6a6a6a" stroke-width="2.6"><path d="M1 7 L6 2 L11 7"/></svg>
<span class="t" id="t63" style="left:1743.00px;top:234.20px;font-size:50.00px;line-height:50.00px;color:#e31e24;font-family:'DejaVu Sans','Liberation Sans',sans-serif;transform:scaleX(0.9819);transform-origin:0 0;direction:rtl;">كشف</span>
<span class="t" id="t64" style="left:1671.00px;top:234.20px;font-size:50.00px;line-height:50.00px;color:#e31e24;font-family:'DejaVu Sans','Liberation Sans',sans-serif;transform:scaleX(0.8959);transform-origin:0 0;">14</span>
<div class="a" style="left:1190px;top:318px;width:252px;height:2px;background:#d2d2d2"></div>
<div class="a" id="grid">
<div class="a" style="left:0;top:0;width:1890px;height:25px;background:#e6e6e6;border-bottom:1px solid #ababab"></div>
<div class="a" style="left:19px;top:3px;width:0;height:0;border-left:20px solid transparent;border-bottom:19px solid #b6b6b6"></div>
<div class="a" style="left:42px;top:0;width:1px;height:26px;background:#ababab"></div>
<div class="c" style="left:43px;width:104px;height:25px;line-height:25px;padding-left:4px;border-right:1px solid #c8c8c8;">Source</div>
<div class="fb" style="left:121px"></div>
<div class="c" style="left:147px;width:129px;height:25px;line-height:25px;padding-left:4px;border-right:1px solid #c8c8c8;letter-spacing:-0.20px;">Incident Date</div>
<div class="fb" style="left:250px"></div>
<div class="c" style="left:276px;width:173px;height:25px;line-height:25px;padding-left:4px;border-right:1px solid #c8c8c8;">Governorate</div>
<div class="fb" style="left:423px"></div>
<div class="c" style="left:449px;width:375px;height:25px;line-height:25px;padding-left:4px;border-right:1px solid #c8c8c8;letter-spacing:-0.20px;">District - Exact Loc. of Constraint</div>
<div class="fb" style="left:798px"></div>
<div class="c" style="left:824px;width:183px;height:25px;line-height:25px;padding-left:4px;border-right:1px solid #c8c8c8;letter-spacing:-0.20px;">Admin1_code</div>
<div class="fb" style="left:981px"></div>
<div class="c" style="left:1007px;width:183px;height:25px;line-height:25px;padding-left:4px;border-right:1px solid #c8c8c8;letter-spacing:-0.20px;">Admin2_code</div>
<div class="fb" style="left:1164px"></div>
<div class="c" style="left:1190px;width:252px;height:25px;line-height:25px;padding-left:4px;border-right:1px solid #c8c8c8;letter-spacing:-0.20px;background:#d2d2d2;color:#217346;height:26px;border-bottom:2px solid #217346;border-right-color:#ababab;">Unified Sub_Category</div>
<div class="fb" style="left:1416px"></div>
<div class="c" style="left:1442px;width:448px;height:25px;line-height:25px;padding-left:4px;border-right:1px solid #c8c8c8;letter-spacing:-0.20px;">Unified Category</div>
<div class="a row" style="top:26px">
<div class="rh">261</div>
<div class="c" style="left:43px;width:104px;line-height:29px;">OCHA</div>
<div class="c" style="left:147px;width:129px;line-height:29px;text-align:right;padding-right:3px;">8/19/2023</div>
<div class="c" style="left:276px;width:173px;line-height:29px;letter-spacing:-0.47px;">Taizz</div>
<div class="c" style="left:449px;width:375px;line-height:29px;">Maqbanah</div>
<div class="c" style="left:824px;width:183px;line-height:29px;">YE15</div>
<div class="c" style="left:1007px;width:183px;line-height:29px;">YE1504</div>
<div class="c" style="left:1190px;width:252px;line-height:29px;letter-spacing:-0.66px;">Shelling</div>
<div class="c" style="left:1442px;width:448px;line-height:29px;letter-spacing:-0.66px;">Shelling</div>
</div>
<div class="a row b" style="top:54px">
<div class="rh">262</div>
<div class="c" style="left:43px;width:104px;line-height:29px;">OCHA</div>
<div class="c" style="left:147px;width:129px;line-height:29px;text-align:right;padding-right:3px;">8/23/2023</div>
<div class="c" style="left:276px;width:173px;line-height:29px;letter-spacing:-0.30px;">Al Hudaydah</div>
<div class="c" style="left:449px;width:375px;line-height:29px;letter-spacing:-0.39px;">Ad Durayhimi</div>
<div class="c" style="left:824px;width:183px;line-height:29px;">YE18</div>
<div class="c" style="left:1007px;width:183px;line-height:29px;">YE1814</div>
<div class="c" style="left:1190px;width:252px;line-height:29px;letter-spacing:-0.24px;">Presence of Mines or UXOs</div>
<div class="c" style="left:1442px;width:448px;line-height:29px;letter-spacing:-0.24px;">Presence of Mines or UXOs</div>
</div>
<div class="a row" style="top:82px">
<div class="rh">263</div>
<div class="c" style="left:43px;width:104px;line-height:29px;">OCHA</div>
<div class="c" style="left:147px;width:129px;line-height:29px;text-align:right;padding-right:3px;">8/24/2023</div>
<div class="c" style="left:276px;width:173px;line-height:29px;letter-spacing:-0.47px;">Taizz</div>
<div class="c" style="left:449px;width:375px;line-height:29px;">Maqbanah</div>
<div class="c" style="left:824px;width:183px;line-height:29px;">YE15</div>
<div class="c" style="left:1007px;width:183px;line-height:29px;">YE1504</div>
<div class="c" style="left:1190px;width:252px;line-height:29px;letter-spacing:-0.66px;">Shelling</div>
<div class="c" style="left:1442px;width:448px;line-height:29px;letter-spacing:-0.66px;">Shelling</div>
</div>
<div class="a row b" style="top:110px">
<div class="rh">264</div>
<div class="c" style="left:43px;width:104px;line-height:29px;">OCHA</div>
<div class="c" style="left:147px;width:129px;line-height:29px;text-align:right;padding-right:3px;">8/25/2023</div>
<div class="c" style="left:276px;width:173px;line-height:29px;letter-spacing:-0.30px;">Al Hudaydah</div>
<div class="c" style="left:449px;width:375px;line-height:29px;letter-spacing:-0.39px;">Ad Durayhimi</div>
<div class="c" style="left:824px;width:183px;line-height:29px;">YE18</div>
<div class="c" style="left:1007px;width:183px;line-height:29px;">YE1814</div>
<div class="c" style="left:1190px;width:252px;line-height:29px;letter-spacing:-0.24px;">Presence of Mines or UXOs</div>
<div class="c" style="left:1442px;width:448px;line-height:29px;letter-spacing:-0.24px;">Presence of Mines or UXOs</div>
</div>
<div class="a row" style="top:138px">
<div class="rh">265</div>
<div class="c" style="left:43px;width:104px;line-height:29px;">OCHA</div>
<div class="c" style="left:147px;width:129px;line-height:29px;text-align:right;padding-right:3px;">8/26/2023</div>
<div class="c" style="left:276px;width:173px;line-height:29px;letter-spacing:-0.30px;">Al Hudaydah</div>
<div class="c" style="left:449px;width:375px;line-height:29px;">Hays</div>
<div class="c" style="left:824px;width:183px;line-height:29px;">YE18</div>
<div class="c" style="left:1007px;width:183px;line-height:29px;">YE1819</div>
<div class="c" style="left:1190px;width:252px;line-height:29px;letter-spacing:-0.66px;">Shelling</div>
<div class="c" style="left:1442px;width:448px;line-height:29px;letter-spacing:-0.66px;">Shelling</div>
</div>
<div class="a row b" style="top:166px">
<div class="rh">266</div>
<div class="c" style="left:43px;width:104px;line-height:29px;">OCHA</div>
<div class="c" style="left:147px;width:129px;line-height:29px;text-align:right;padding-right:3px;">8/31/2023</div>
<div class="c" style="left:276px;width:173px;line-height:29px;letter-spacing:-0.35px;">Al Bayda</div>
<div class="c" style="left:449px;width:375px;line-height:29px;letter-spacing:-0.35px;">Az Zahir</div>
<div class="c" style="left:824px;width:183px;line-height:29px;">YE14</div>
<div class="c" style="left:1007px;width:183px;line-height:29px;">YE1405</div>
<div class="c" style="left:1190px;width:252px;line-height:29px;letter-spacing:-0.66px;">Shelling</div>
<div class="c" style="left:1442px;width:448px;line-height:29px;letter-spacing:-0.66px;">Shelling</div>
</div>
<div class="a row" style="top:194px">
<div class="rh">267</div>
<div class="c" style="left:43px;width:104px;line-height:29px;">UNDSS</div>
<div class="c" style="left:147px;width:129px;line-height:29px;text-align:right;padding-right:3px;">1/8/2022</div>
<div class="c" style="left:276px;width:173px;line-height:29px;letter-spacing:-0.56px;">Lahj</div>
<div class="c" style="left:449px;width:375px;line-height:29px;letter-spacing:-0.29px;">Tur Al Bahah</div>
<div class="c" style="left:824px;width:183px;line-height:29px;">YE25</div>
<div class="c" style="left:1007px;width:183px;line-height:29px;">YE2511</div>
<div class="c" style="left:1190px;width:252px;line-height:29px;letter-spacing:-0.36px;">Kidnapping or Hijacking of Humanitarian Workers</div>
<div class="c" style="left:1442px;width:448px;line-height:29px;letter-spacing:-0.36px;">Kidnapping or Hijacking of Humanitarian Workers</div>
</div>
<div class="a row b" style="top:222px">
<div class="rh">268</div>
<div class="c" style="left:43px;width:104px;line-height:29px;">UNDSS</div>
<div class="c" style="left:147px;width:129px;line-height:29px;text-align:right;padding-right:3px;">1/9/2022</div>
<div class="c" style="left:276px;width:173px;line-height:29px;">Hadramaut</div>
<div class="c" style="left:449px;width:375px;line-height:29px;letter-spacing:-0.41px;">Wadi Al Ayn</div>
<div class="c" style="left:824px;width:183px;line-height:29px;">YE19</div>
<div class="c" style="left:1007px;width:183px;line-height:29px;">YE1919</div>
<div class="c" style="left:1190px;width:252px;line-height:29px;letter-spacing:-0.41px;">Damage to Humanitarian Goods or Premises</div>
<div class="c" style="left:1442px;width:448px;line-height:29px;letter-spacing:-0.27px;">Damage to Humanitarian Goods or Premises</div>
</div>
<div class="a row" style="top:250px">
<div class="rh">269</div>
<div class="c" style="left:43px;width:104px;line-height:29px;">UNDSS</div>
<div class="c" style="left:147px;width:129px;line-height:29px;text-align:right;padding-right:3px;">1/12/2022</div>
<div class="c" style="left:276px;width:173px;line-height:29px;letter-spacing:-0.47px;">Taizz</div>
<div class="c" style="left:449px;width:375px;line-height:29px;">Mawza&#x27;</div>
<div class="c" style="left:824px;width:183px;line-height:29px;">YE15</div>
<div class="c" style="left:1007px;width:183px;line-height:29px;">YE1507</div>
<div class="c" style="left:1190px;width:252px;line-height:29px;letter-spacing:-0.36px;">Kidnapping or Hijacking of Humanitarian Workers</div>
<div class="c" style="left:1442px;width:448px;line-height:29px;letter-spacing:-0.36px;">Kidnapping or Hijacking of Humanitarian Workers</div>
</div>
<div class="a row b" style="top:278px">
<div class="rh">270</div>
<div class="c" style="left:43px;width:104px;line-height:29px;">UNDSS</div>
<div class="c" style="left:147px;width:129px;line-height:29px;text-align:right;padding-right:3px;">2/10/2022</div>
<div class="c" style="left:276px;width:173px;line-height:29px;">Hadramaut</div>
<div class="c" style="left:449px;width:375px;line-height:29px;letter-spacing:-0.37px;">Al Qaff</div>
<div class="c" style="left:824px;width:183px;line-height:29px;">YE19</div>
<div class="c" style="left:1007px;width:183px;line-height:29px;">YE1903</div>
<div class="c" style="left:1190px;width:252px;line-height:29px;letter-spacing:-0.28px;">Threats Against Humanitarian Workers</div>
<div class="c" style="left:1442px;width:448px;line-height:29px;letter-spacing:-0.28px;">Threats Against Humanitarian Workers</div>
</div>
<div class="a row" style="top:306px">
<div class="rh">271</div>
<div class="c" style="left:43px;width:104px;line-height:29px;">UNDSS</div>
<div class="c" style="left:147px;width:129px;line-height:29px;text-align:right;padding-right:3px;">2/11/2022</div>
<div class="c" style="left:276px;width:173px;line-height:29px;">Abyan</div>
<div class="c" style="left:449px;width:375px;line-height:29px;letter-spacing:-0.37px;">Mudiyah</div>
<div class="c" style="left:824px;width:183px;line-height:29px;">YE12</div>
<div class="c" style="left:1007px;width:183px;line-height:29px;">YE1202</div>
<div class="c" style="left:1190px;width:252px;line-height:29px;letter-spacing:-0.36px;">Kidnapping or Hijacking of Humanitarian Workers</div>
<div class="c" style="left:1442px;width:448px;line-height:29px;letter-spacing:-0.36px;">Kidnapping or Hijacking of Humanitarian Workers</div>
</div>
<div class="a row b" style="top:334px">
<div class="rh">272</div>
<div class="c" style="left:43px;width:104px;line-height:29px;">UNDSS</div>
<div class="c" style="left:147px;width:129px;line-height:29px;text-align:right;padding-right:3px;">2/13/2022</div>
<div class="c" style="left:276px;width:173px;line-height:29px;letter-spacing:-0.47px;">Marib</div>
<div class="c" style="left:449px;width:375px;line-height:29px;letter-spacing:-0.43px;">Marib City</div>
<div class="c" style="left:824px;width:183px;line-height:29px;">YE26</div>
<div class="c" style="left:1007px;width:183px;line-height:29px;">YE2612</div>
<div class="c" style="left:1190px;width:252px;line-height:29px;letter-spacing:-0.28px;">Forced Entry into Premises</div>
<div class="c" style="left:1442px;width:448px;line-height:29px;letter-spacing:-0.28px;">Threats Against Humanitarian Workers</div>
</div>
<div class="a row" style="top:362px">
<div class="rh">273</div>
<div class="c" style="left:43px;width:104px;line-height:29px;">UNDSS</div>
<div class="c" style="left:147px;width:129px;line-height:29px;text-align:right;padding-right:3px;">2/17/2022</div>
<div class="c" style="left:276px;width:173px;line-height:29px;letter-spacing:-0.47px;">Taizz</div>
<div class="c" style="left:449px;width:375px;line-height:29px;">Mawza&#x27;</div>
<div class="c" style="left:824px;width:183px;line-height:29px;">YE15</div>
<div class="c" style="left:1007px;width:183px;line-height:29px;">YE1507</div>
<div class="c" style="left:1190px;width:252px;line-height:29px;letter-spacing:-0.36px;">Kidnapping or Hijacking of Humanitarian Workers</div>
<div class="c" style="left:1442px;width:448px;line-height:29px;letter-spacing:-0.36px;">Kidnapping or Hijacking of Humanitarian Workers</div>
</div>
<div class="a row b" style="top:390px">
<div class="rh">274</div>
<div class="c" style="left:43px;width:104px;line-height:29px;">UNDSS</div>
<div class="c" style="left:147px;width:129px;line-height:29px;text-align:right;padding-right:3px;">2/21/2022</div>
<div class="c" style="left:276px;width:173px;line-height:29px;">Shabwah</div>
<div class="c" style="left:449px;width:375px;line-height:29px;">Ataq</div>
<div class="c" style="left:824px;width:183px;line-height:29px;">YE21</div>
<div class="c" style="left:1007px;width:183px;line-height:29px;">YE2113</div>
<div class="c" style="left:1190px;width:252px;line-height:29px;letter-spacing:-0.36px;">Kidnapping or Hijacking of Humanitarian Workers</div>
<div class="c" style="left:1442px;width:448px;line-height:29px;letter-spacing:-0.36px;">Kidnapping or Hijacking of Humanitarian Workers</div>
</div>
<div class="a row" style="top:418px">
<div class="rh">275</div>
<div class="c" style="left:43px;width:104px;line-height:29px;">UNDSS</div>
<div class="c" style="left:147px;width:129px;line-height:29px;text-align:right;padding-right:3px;">2/27/2022</div>
<div class="c" style="left:276px;width:173px;line-height:29px;">Aden</div>
<div class="c" style="left:449px;width:375px;line-height:29px;letter-spacing:-0.30px;">Al Burayqah</div>
<div class="c" style="left:824px;width:183px;line-height:29px;">YE24</div>
<div class="c" style="left:1007px;width:183px;line-height:29px;">YE2404</div>
<div class="c" style="left:1190px;width:252px;line-height:29px;letter-spacing:-0.36px;">Kidnapping or Hijacking of Humanitarian Workers</div>
<div class="c" style="left:1442px;width:448px;line-height:29px;letter-spacing:-0.36px;">Kidnapping or Hijacking of Humanitarian Workers</div>
</div>
<div class="a row b" style="top:446px">
<div class="rh">276</div>
<div class="c" style="left:43px;width:104px;line-height:29px;">UNDSS</div>
<div class="c" style="left:147px;width:129px;line-height:29px;text-align:right;padding-right:3px;">3/4/2022</div>
<div class="c" style="left:276px;width:173px;line-height:29px;letter-spacing:-0.47px;">Taizz</div>
<div class="c" style="left:449px;width:375px;line-height:29px;letter-spacing:-0.37px;">Mawiyah</div>
<div class="c" style="left:824px;width:183px;line-height:29px;">YE15</div>
<div class="c" style="left:1007px;width:183px;line-height:29px;">YE1501</div>
<div class="c" style="left:1190px;width:252px;line-height:29px;letter-spacing:-0.28px;">Threats Against Humanitarian Workers</div>
<div class="c" style="left:1442px;width:448px;line-height:29px;letter-spacing:-0.28px;">Threats Against Humanitarian Workers</div>
</div>
<div class="a row" style="top:474px">
<div class="rh">277</div>
<div class="c" style="left:43px;width:104px;line-height:29px;">UNDSS</div>
<div class="c" style="left:147px;width:129px;line-height:29px;text-align:right;padding-right:3px;">3/5/2022</div>
<div class="c" style="left:276px;width:173px;line-height:29px;">Hadramaut</div>
<div class="c" style="left:449px;width:375px;line-height:29px;letter-spacing:-0.41px;">Al Abr</div>
<div class="c" style="left:824px;width:183px;line-height:29px;">YE19</div>
<div class="c" style="left:1007px;width:183px;line-height:29px;">YE1906</div>
<div class="c" style="left:1190px;width:252px;line-height:29px;letter-spacing:-0.36px;">Kidnapping or Hijacking of Humanitarian Workers</div>
<div class="c" style="left:1442px;width:448px;line-height:29px;letter-spacing:-0.36px;">Kidnapping or Hijacking of Humanitarian Workers</div>
</div>
<div class="a row b" style="top:502px">
<div class="rh">278</div>
<div class="c" style="left:43px;width:104px;line-height:29px;">UNDSS</div>
<div class="c" style="left:147px;width:129px;line-height:29px;text-align:right;padding-right:3px;">3/8/2022</div>
<div class="c" style="left:276px;width:173px;line-height:29px;">Hadramaut</div>
<div class="c" style="left:449px;width:375px;line-height:29px;letter-spacing:-0.50px;">Al Mukalla City</div>
<div class="c" style="left:824px;width:183px;line-height:29px;">YE19</div>
<div class="c" style="left:1007px;width:183px;line-height:29px;">YE1927</div>
<div class="c" style="left:1190px;width:252px;line-height:29px;letter-spacing:-0.28px;">Threats Against Humanitarian Workers</div>
<div class="c" style="left:1442px;width:448px;line-height:29px;letter-spacing:-0.28px;">Threats Against Humanitarian Workers</div>
</div>
<div class="a row" style="top:530px">
<div class="rh">279</div>
<div class="c" style="left:43px;width:104px;line-height:29px;">UNDSS</div>
<div class="c" style="left:147px;width:129px;line-height:29px;text-align:right;padding-right:3px;">3/15/2022</div>
<div class="c" style="left:276px;width:173px;line-height:29px;letter-spacing:-0.47px;">Taizz</div>
<div class="c" style="left:449px;width:375px;line-height:29px;">Mawza&#x27;</div>
<div class="c" style="left:824px;width:183px;line-height:29px;">YE15</div>
<div class="c" style="left:1007px;width:183px;line-height:29px;">YE1507</div>
<div class="c" style="left:1190px;width:252px;line-height:29px;letter-spacing:-0.36px;">Kidnapping or Hijacking of Humanitarian Workers</div>
<div class="c" style="left:1442px;width:448px;line-height:29px;letter-spacing:-0.36px;">Kidnapping or Hijacking of Humanitarian Workers</div>
</div>
<div class="a row b" style="top:558px">
<div class="rh">280</div>
<div class="c" style="left:43px;width:104px;line-height:29px;">UNDSS</div>
<div class="c" style="left:147px;width:129px;line-height:29px;text-align:right;padding-right:3px;">3/17/2022</div>
<div class="c" style="left:276px;width:173px;line-height:29px;letter-spacing:-0.31px;">Al Maharah</div>
<div class="c" style="left:449px;width:375px;line-height:29px;letter-spacing:-0.41px;">Haswin</div>
<div class="c" style="left:824px;width:183px;line-height:29px;">YE28</div>
<div class="c" style="left:1007px;width:183px;line-height:29px;">YE2809</div>
<div class="c" style="left:1190px;width:252px;line-height:29px;letter-spacing:-0.41px;">Damage to Humanitarian Goods or Premises</div>
<div class="c" style="left:1442px;width:448px;line-height:29px;letter-spacing:-0.27px;">Damage to Humanitarian Goods or Premises</div>
</div>
<div class="a row" style="top:586px">
<div class="rh">281</div>
<div class="c" style="left:43px;width:104px;line-height:29px;">UNDSS</div>
<div class="c" style="left:147px;width:129px;line-height:29px;text-align:right;padding-right:3px;">3/19/2022</div>
<div class="c" style="left:276px;width:173px;line-height:29px;letter-spacing:-0.47px;">Taizz</div>
<div class="c" style="left:449px;width:375px;line-height:29px;">Ash Shamayatayn</div>
<div class="c" style="left:824px;width:183px;line-height:29px;">YE15</div>
<div class="c" style="left:1007px;width:183px;line-height:29px;">YE1514</div>
<div class="c" style="left:1190px;width:252px;line-height:29px;letter-spacing:-0.41px;">Attempted Killing or Killing of Humanitarian Workers</div>
<div class="c" style="left:1442px;width:448px;line-height:29px;letter-spacing:-0.41px;">Attempted Killing or Killing of Humanitarian Workers</div>
</div>
</div>
<div class="a box" style="left:1892px;top:320px;width:25px;height:25px"></div>
<div class="a" style="left:1899px;top:329px;border-left:5.5px solid transparent;border-right:5.5px solid transparent;border-bottom:6px solid #000"></div>
<div class="a box" style="left:1892px;top:696px;width:25px;height:27px"></div>
<div class="a box" style="left:1892px;top:891px;width:25px;height:25px;background:#e5f1e9;border-color:#579570"></div>
<div class="a" style="left:1899px;top:901px;border-left:5.5px solid transparent;border-right:5.5px solid transparent;border-top:6px solid #000"></div>
<div class="a" style="left:0;top:914px;width:1920px;height:34px;background:#e6e6e6;border-top:1px solid #ababab;border-bottom:1px solid #c6c6c6;box-sizing:border-box"></div>
<div class="a" style="left:29px;top:925px;border-top:5.5px solid transparent;border-bottom:5.5px solid transparent;border-right:6px solid #c6c6c6"></div>
<div class="a" style="left:64px;top:925px;border-top:5.5px solid transparent;border-bottom:5.5px solid transparent;border-left:6px solid #c6c6c6"></div>
<div class="a" style="left:118px;top:914px;width:147px;height:31px;background:#fff;border-bottom:2px solid #217346;border-left:1px solid #c6c6c6;border-right:1px solid #c6c6c6;box-sizing:border-box"></div>
<span class="t" id="t65" style="left:130.50px;top:920.29px;font-size:19.50px;line-height:19.50px;color:#217346;font-weight:bold;letter-spacing:0.088px;">Final Filtered</span>
<svg style="left:303px;top:919px" width="24" height="24" viewBox="0 0 24 24" fill="none" stroke="#767676" stroke-width="1.4"><circle cx="12" cy="12" r="10.5"/><path d="M12 6.5 V17.5 M6.5 12 H17.5"/></svg>
<div class="a" style="left:1148px;top:923px;width:3px;height:3px;background:#b4b4b4"></div>
<div class="a" style="left:1148px;top:930px;width:3px;height:3px;background:#b4b4b4"></div>
<div class="a" style="left:1148px;top:937px;width:3px;height:3px;background:#b4b4b4"></div>
<div class="a box" style="left:1168px;top:919px;width:25px;height:24px"></div>
<div class="a" style="left:1177px;top:925px;border-top:5.5px solid transparent;border-bottom:5.5px solid transparent;border-right:6px solid #000"></div>
<div class="a box" style="left:1192px;top:919px;width:123px;height:24px"></div>
<div class="a box" style="left:1866px;top:919px;width:25px;height:24px"></div>
<div class="a" style="left:1876px;top:925px;border-top:5.5px solid transparent;border-bottom:5.5px solid transparent;border-left:6px solid #000"></div>
<div class="a" style="left:0;top:948px;width:1920px;height:33px;background:#f3f3f3"></div>
<span class="t" id="t66" style="left:10.00px;top:957.66px;font-size:16.00px;line-height:16.00px;color:#444;transform:scaleX(0.9189);transform-origin:0 0;">Ready</span>
<svg style="left:82px;top:955px" width="24" height="24" viewBox="0 0 24 24" fill="none" stroke="#444" stroke-width="1.5">
<path d="M9 3.2 A7.5 7.5 0 1 0 9 18.2" stroke-dasharray="4 2.2"/><circle cx="11.5" cy="6" r="1.6" fill="#444" stroke="none"/><path d="M6 9.5 H17 M11.5 9.5 V14 M11.5 14 L8 19 M11.5 14 L14 17"/><path d="M13 14.5 L21.5 22 M21.5 14.5 L13 22" stroke-width="2"/></svg>
<span class="t" id="t67" style="left:108.00px;top:957.66px;font-size:16.00px;line-height:16.00px;color:#444;letter-spacing:-0.276px;">Accessibility: Investigate</span>
<div class="a" style="left:1475px;top:948px;width:60px;height:33px;background:#c8c8c8"></div>
<svg style="left:1495px;top:955px" width="20" height="20" viewBox="0 0 20 20" fill="none" stroke="#6a6a6a" stroke-width="1.2"><path d="M0.6 0.6 H19.4 V18.4 H0.6 Z M0.6 6.5 H19.4 M0.6 12.5 H19.4 M7 0.6 V18.4 M13 0.6 V18.4"/></svg>
<svg style="left:1555px;top:955px" width="20" height="20" viewBox="0 0 20 20" fill="none" stroke="#6a6a6a" stroke-width="1.3"><path d="M0.7 0.7 H18.3 V18.3 H0.7 Z"/><path d="M4.5 4.5 H14.5 V14.5 H4.5 Z M7 8 H12 M7 11 H12"/></svg>
<svg style="left:1615px;top:955px" width="20" height="20" viewBox="0 0 20 20" fill="none" stroke="#6a6a6a" stroke-width="1.3"><path d="M0.7 0.7 H18.3 V17.3 H0.7 Z M0.7 9.5 H9.5 V0.7 M5 0.7 V6"/></svg>
<div class="a" style="left:1663px;top:964px;width:12px;height:2px;background:#555"></div>
<div class="a" style="left:1683px;top:964px;width:148px;height:2px;background:#333"></div>
<div class="a" style="left:1753px;top:956px;width:8px;height:17px;background:#444"></div>
<div class="a" style="left:1839px;top:964px;width:12px;height:2px;background:#555"></div><div class="a" style="left:1844px;top:959px;width:2px;height:12px;background:#555"></div>
<span class="t" id="t68" style="left:1869.50px;top:957.66px;font-size:16.00px;line-height:16.00px;color:#444;transform:scaleX(0.9530);transform-origin:0 0;">100%</span>
<div class="a" style="left:0;top:981px;width:1920px;height:11px;background:#3b3e45"></div>
<div class="a" style="left:72px;top:981px;width:431px;height:11px;background:#e9e9e9;border-top:1px solid #bdbdbd;box-sizing:border-box"></div>
<div class="a" style="left:408px;top:985px;width:29px;height:29px;border-radius:15px;background:linear-gradient(90deg,#5b7df0,#8a6fe8)"></div>
<div class="a" style="left:465px;top:986px;width:23px;height:23px;border-radius:12px;background:linear-gradient(90deg,#f0a05a,#e8607a)"></div>
<div class="a" style="left:881px;top:981px;width:73px;height:11px;background:#5f6368"></div>
<div class="a" style="left:1911px;top:981px;width:9px;height:11px;background:#2c2f35;border-left:1px solid #666"></div>
<div class="a" id="ar1" style="left:586.5px;top:92.0px;width:500px;text-align:right;direction:rtl;white-space:pre;transform-origin:100% 0;font-family:'DejaVu Sans','Liberation Sans',sans-serif;font-size:51.0px;line-height:51.0px;transform:rotate(-21.80deg) scaleX(1.022);color:#e31e24"><span style="display:inline-block;transform:scaleX(0.82);margin:0 -0.07em;position:relative;top:0.1em;font-size:0.96em">#</span>لن_نصمت</div>
<div class="a" id="ar2" style="left:627.5px;top:149.0px;width:500px;text-align:right;direction:rtl;white-space:pre;transform-origin:100% 0;font-family:'DejaVu Sans','Liberation Sans',sans-serif;font-size:51.0px;line-height:51.0px;transform:rotate(-21.80deg) scaleX(0.998);color:#e31e24"><span style="display:inline-block;transform:scaleX(0.82);margin:0 -0.07em;position:relative;top:0.1em;font-size:0.96em">#</span>وين_الفلوس</div>
</body></html>
